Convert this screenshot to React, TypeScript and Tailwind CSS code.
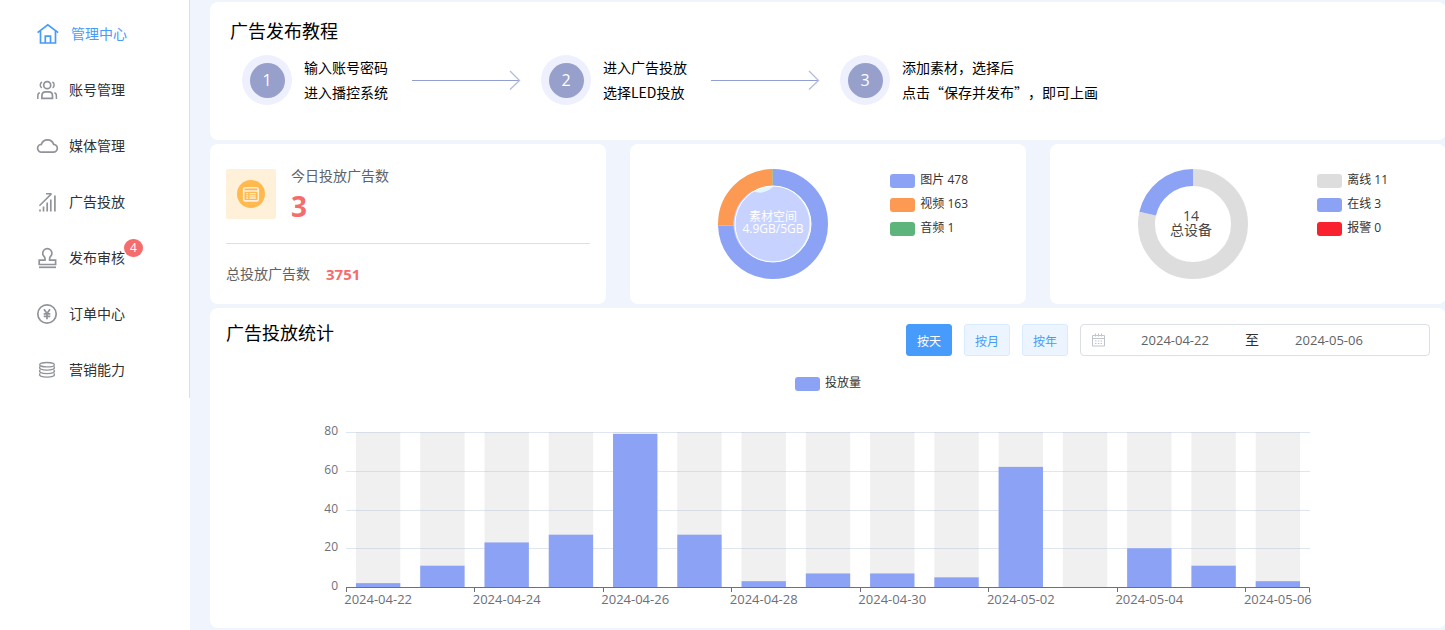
import { useState } from "react";
import type { ReactNode } from "react";

const Svg = ({ size = 20, children }: { size?: number; children: ReactNode }) => (
  <svg
    width={size}
    height={size}
    viewBox={`0 0 ${size} ${size}`}
    fill="none"
    stroke="currentColor"
    strokeWidth="1.7"
    className="shrink-0 overflow-visible"
    aria-hidden="true"
  >
    {children}
  </svg>
);

const menu = [
  {
    label: "管理中心",
    icon: (
      <Svg size={22}>
        <path d="M.6 9.6 10.8 1.8 21.2 9.6" />
        <path d="M3.5 8v12h15V8M8.3 20v-6.8h5.2V20" />
      </Svg>
    ),
  },
  {
    label: "账号管理",
    icon: (
      <Svg>
        <circle cx="10.2" cy="5.2" r="3.5" />
        <path d="M4.9 18.3v-2.4c0-2.6 1.4-4 3.6-4h3.4c2.2 0 3.6 1.4 3.6 4v2.4z" />
        <path d="M5 2C2.7 3.2 2.7 6.6 4.8 7.8M15.4 2c2.3 1.2 2.3 4.6.2 5.8" strokeWidth="1.5" />
        <path d="M.8 19v-3c0-1.8.6-2.9 2-3.3M19.4 19v-3c0-1.8-.6-2.9-2-3.3" strokeWidth="1.5" />
      </Svg>
    ),
  },
  {
    label: "媒体管理",
    icon: (
      <Svg>
        <path d="M4.6 16.1h11.6a3.9 3.9 0 0 0 .4-7.8 6.4 6.4 0 0 0-12.2 0 3.9 3.9 0 0 0 .2 7.8z" />
      </Svg>
    ),
  },
  {
    label: "广告投放",
    icon: (
      <Svg>
        <path d="M2.4 13.8 14.4 1.9M9 1.8h5.6" strokeWidth="1.5" />
        <path d="M3 17.5v2M6.5 14.5v5M10.2 10.5v9M13.8 7.5v12M17.9 3.5v16" />
      </Svg>
    ),
  },
  {
    label: "发布审核",
    badge: 4,
    icon: (
      <Svg>
        <path d="M8 12.2c0-1.2.4-2-.8-3.6a4.6 4.6 0 1 1 6.2 0c-1.2 1.6-.8 2.4-.8 3.6h6v4.3H2.200v-4.3z" />
        <path d="M2 19.3h17" />
      </Svg>
    ),
  },
  {
    label: "订单中心",
    icon: (
      <Svg>
        <circle cx="10" cy="10" r="9.2" />
        <path d="M7 5.3 10 9.5l3-4.2M10 9.5v5.7M6.7 9.8h6.6M6.7 12.3h6.6" />
      </Svg>
    ),
  },
  {
    label: "营销能力",
    icon: (
      <Svg>
        <g strokeWidth="1.4">
          <ellipse cx="10" cy="4.7" rx="7.3" ry="2.2" />
          <path d="M3.2 6.400q-1.500 1.700.6 2.700c3 1.300 9.400 1.300 12.400 0q2.100-1 .6-2.700" />
          <path d="M3.2 9.900q-1.500 1.700.6 2.700c3 1.300 9.400 1.300 12.400 0q2.100-1 .6-2.700" />
          <path d="M3.2 13.400q-1.500 1.700.6 2.700c3 1.300 9.400 1.300 12.400 0q2.100-1 .6-2.700" />
        </g>
      </Svg>
    ),
  },
];

const steps = [
  ["输入账号密码", "进入播控系统"],
  ["进入广告投放", "选择LED投放"],
  ["添加素材，选择后", "点击“保存并发布”，即可上画"],
];

const materials = [
  { label: "图片", value: 478, color: "#8ca2f4" },
  { label: "视频", value: 163, color: "#fc9a53" },
  { label: "音频", value: 1, color: "#5db57b" },
];

const devices = [
  { label: "离线", value: 11, color: "#dddddd" },
  { label: "在线", value: 3, color: "#8ca2f4" },
  { label: "报警", value: 0, color: "#f9212d" },
];

const daily = [
  { date: "2024-04-22", value: 2 },
  { date: "2024-04-23", value: 11 },
  { date: "2024-04-24", value: 23 },
  { date: "2024-04-25", value: 27 },
  { date: "2024-04-26", value: 79 },
  { date: "2024-04-27", value: 27 },
  { date: "2024-04-28", value: 3 },
  { date: "2024-04-29", value: 7 },
  { date: "2024-04-30", value: 7 },
  { date: "2024-05-01", value: 5 },
  { date: "2024-05-02", value: 62 },
  { date: "2024-05-03", value: 0 },
  { date: "2024-05-04", value: 20 },
  { date: "2024-05-05", value: 11 },
  { date: "2024-05-06", value: 3 },
];

type Slice = { label: string; value: number; color: string };

function Sidebar() {
  const [active, setActive] = useState(0);

  return (
    <aside className="w-[190px] shrink-0 bg-white">
      <nav className="border-r border-[#dcdfe6] pt-1.5">
        {menu.map((item, index) => (
          <button
            key={item.label}
            type="button"
            onClick={() => setActive(index)}
            className={`flex h-14 w-full items-center gap-3 pl-[37px] text-sm ${active === index ? "text-[#479bfb]" : "text-[#303133]"}`}
          >
            <span className={active === index ? "text-[#479bfb]" : "text-[#909399]"}>{item.icon}</span>
            <span className="relative">
              {item.label}
              {item.badge && (
                <span className="absolute -top-[9px] left-full -ml-px flex h-[18px] min-w-[19px] items-center justify-center rounded-full bg-[#f56c6c] text-xs font-medium text-white">
                  {item.badge}
                </span>
              )}
            </span>
          </button>
        ))}
      </nav>
    </aside>
  );
}

function Tutorial() {
  return (
    <section className="rounded-lg bg-white px-5 pt-[17px] pb-[35px]">
      <h2 className="text-lg leading-6 text-black">广告发布教程</h2>
      <ol className="mt-3 flex items-center pl-3">
        {steps.map(([first, second], index) => (
          <li key={first} className="flex items-center">
            <span className="flex size-[50px] items-center justify-center rounded-full bg-[#eef0fe]">
              <span className="flex size-[35px] items-center justify-center rounded-full bg-[#96a0cb] text-base text-white">
                {index + 1}
              </span>
            </span>
            <p className="ml-3 font-['Noto_Sans_CJK_SC',sans-serif] text-sm leading-[25px] whitespace-nowrap text-black [text-spacing-trim:space-all]">
              {first}
              <br />
              {second}
            </p>
            {index < steps.length - 1 && (
              <svg width="109" height="20" viewBox="0 0 109 20" fill="none" className="mr-5 ml-6" aria-hidden="true">
                <path d="M0 10.5h107" stroke="#929fd0" />
                <path d="m98 1 9.5 9.5L98 19.5" stroke="#b3bcdc" strokeWidth="1.3" />
              </svg>
            )}
          </li>
        ))}
      </ol>
    </section>
  );
}

function TodayCard() {
  return (
    <section className="rounded-lg bg-white px-4 pt-5">
      <div className="flex items-center gap-[15px] border-b border-[#dcdfe6] pb-[19px]">
        <div className="flex size-[50px] items-center justify-center rounded-xs bg-[#fff0da]">
          <svg width="28" height="28" viewBox="0 0 28 28" fill="none" stroke="#fff0da" aria-hidden="true">
            <circle cx="14" cy="14" r="14" fill="#ffb94e" stroke="none" />
            <rect x="6.7" y="7.7" width="14.6" height="13.2" rx="1.5" strokeWidth="1.6" />
            <path
              d="M7 11h14M9.2 13.7h2M9.2 15.8h2M9.2 18h2M12.5 13.7h6.3M12.5 15.8h6.3M12.5 18h6.3"
              strokeWidth="1.3"
            />
          </svg>
        </div>
        <div>
          <p className="text-sm leading-6 text-[#606266]">今日投放广告数</p>
          <p className="text-[28px] leading-9 font-bold text-[#f56c6c]">3</p>
        </div>
      </div>
      <p className="flex items-center gap-4 pt-[18px] text-sm leading-6 text-[#606266]">
        总投放广告数
        <strong className="text-[15px] text-[#f56c6c]">3751</strong>
      </p>
    </section>
  );
}

function Donut({ slices, children }: { slices: Slice[]; children: ReactNode }) {
  const total = slices.reduce((sum, slice) => sum + slice.value, 0);
  let start = 0;

  return (
    <svg width="110" height="110" viewBox="0 0 110 110" className="shrink-0">
      <g fill="none" strokeWidth="17" transform="rotate(-90 55 55)">
        {slices
          .filter((slice) => slice.value > 0)
          .map((slice) => {
            const share = (slice.value / total) * 100;
            const offset = -start;
            start += share;
            return (
              <circle
                key={slice.label}
                cx="55"
                cy="55"
                r="46.5"
                pathLength={100}
                stroke={slice.color}
                strokeDasharray={`${share} ${100 - share}`}
                strokeDashoffset={offset}
              />
            );
          })}
      </g>
      {children}
    </svg>
  );
}

function DonutCard({ slices, children }: { slices: Slice[]; children: ReactNode }) {
  return (
    <section className="flex justify-between rounded-lg bg-white pt-[25px] pr-[58px] pb-[25px] pl-[88px]">
      <Donut slices={slices}>{children}</Donut>
      <ul>
        {slices.map((slice) => (
          <li key={slice.label} className="flex h-6 items-center gap-[5px] text-xs text-[#333333]">
            <span className="h-3.5 w-[25px] rounded-[3px]" style={{ backgroundColor: slice.color }} />
            <span className="pb-0.5">
              {slice.label} {slice.value}
            </span>
          </li>
        ))}
      </ul>
    </section>
  );
}

function DailyChart() {
  const left = 120;
  const width = 964;
  const bottom = 221;
  const height = 155;
  const band = width / daily.length;
  const barWidth = band * 0.69;
  const toY = (value: number) => bottom - (value / 80) * height;

  return (
    <svg viewBox="0 0 1204 252" className="mt-2.5 w-full" role="img" aria-label="投放量">
      <rect x="569" y="11" width="25" height="14" rx="3" fill="#8ca2f4" />
      <text x="599" y="21" fontSize="12" fill="#333333">
        投放量
      </text>

      {[0, 20, 40, 60, 80].map((tick) => (
        <g key={tick}>
          {tick > 0 && <path d={`M${left} ${Math.round(toY(tick)) + 0.5}h${width}`} stroke="#e0e6f1" />}
          <text x="112" y={Math.round(toY(tick)) + 3} fontSize="12" textAnchor="end" fill="#6e7079">
            {tick}
          </text>
        </g>
      ))}

      {daily.map((day, index) => {
        const x = left + band * index + (band - barWidth) / 2;
        return (
          <g key={day.date}>
            <rect x={x} y={bottom - height} width={barWidth} height={height} fill="#b4b4b4" fillOpacity="0.2" />
            <rect x={x} y={toY(day.value)} width={barWidth} height={bottom - toY(day.value)} fill="#8ca2f4" />
            {index % 2 === 0 && (
              <>
                <path d={`M${Math.floor(left + band * index) + 0.5} ${bottom}v5`} stroke="#6e7079" />
                <text x={left + band * (index + 0.5)} y="238" fontSize="13" textAnchor="middle" fill="#6e7079">
                  {day.date}
                </text>
              </>
            )}
          </g>
        );
      })}
      <path d={`M${left} ${bottom + 0.5}h${width - 0.5}v5`} stroke="#6e7079" fill="none" />
    </svg>
  );
}

function Statistics() {
  const [range, setRange] = useState("按天");
  const [from, setFrom] = useState("2024-04-22");
  const [to, setTo] = useState("2024-05-06");

  return (
    <section className="rounded-lg bg-white px-4 pt-4 pb-2.5">
      <div className="flex justify-between">
        <h2 className="text-lg leading-[18px] text-black">广告投放统计</h2>
        <div className="flex gap-3">
          {["按天", "按月", "按年"].map((item) => (
            <button
              key={item}
              type="button"
              onClick={() => setRange(item)}
              className={`h-8 w-[46px] rounded-[3px] border pt-1 text-xs ${range === item ? "border-[#479bfb] bg-[#479bfb] text-white" : "border-[#d9ecff] bg-[#ecf5ff] text-[#479bfb]"}`}
            >
              {item}
            </button>
          ))}
          <div className="flex h-8 w-[350px] items-center rounded-sm border border-[#dcdfe6] pl-[11px] text-[13px] text-[#606266]">
            <svg width="13" height="14" viewBox="0 0 13 14" fill="none" stroke="#c0c4cc" className="mr-1.5" aria-hidden="true">
              <path d="M.5 2.5h12v10.5H.5zM.5 5.5h12M3.5.5v3M6.5.5v3M9.5.5v3" />
              <path d="M3 8h1.5M5.8 8h1.5M8.6 8h1.5M3 10.5h1.5M5.8 10.5h1.5M8.6 10.5h1.5" />
            </svg>
            <input
              aria-label="开始日期"
              value={from}
              onChange={(event) => setFrom(event.target.value)}
              className="w-32 pt-0.5 text-center outline-none"
            />
            <span className="w-[26px] text-center text-sm text-[#303133]">至</span>
            <input
              aria-label="结束日期"
              value={to}
              onChange={(event) => setTo(event.target.value)}
              className="w-32 pt-0.5 text-center outline-none"
            />
          </div>
        </div>
      </div>
      <DailyChart />
    </section>
  );
}

export default function App() {
  return (
    <div
      className="flex min-h-screen overflow-x-hidden bg-[#f0f5fd] font-['Open_Sans','Noto_Sans_CJK_SC',sans-serif]"
      lang="zh-CN"
    >
      <Sidebar />
      <main className="-mr-px flex min-w-0 flex-1 flex-col gap-1 py-0.5 pl-5">
        <Tutorial />
        <div className="grid grid-cols-3 gap-6">
          <TodayCard />
          <DonutCard slices={materials}>
            <circle cx="55" cy="55" r="38" fill="#e3f7ff" />
            <path d="M35 21.7C41 25 48 24.5 56 17A38 38 0 1 1 35 21.7z" fill="#c7d2ff" />
            <circle cx="55" cy="55" r="38" fill="none" stroke="#ffffff" />
            <text y="52" fill="#ffffff" fontSize="12" textAnchor="middle">
              <tspan x="55">素材空间</tspan>
              <tspan x="55" dy="12">
                4.9GB/5GB
              </tspan>
            </text>
          </DonutCard>
          <DonutCard slices={devices}>
            <text y="52" fill="#464646" fontSize="14" textAnchor="middle">
              <tspan x="53">14</tspan>
              <tspan x="53" dy="14">
                总设备
              </tspan>
            </text>
          </DonutCard>
        </div>
        <Statistics />
      </main>
    </div>
  );
}
